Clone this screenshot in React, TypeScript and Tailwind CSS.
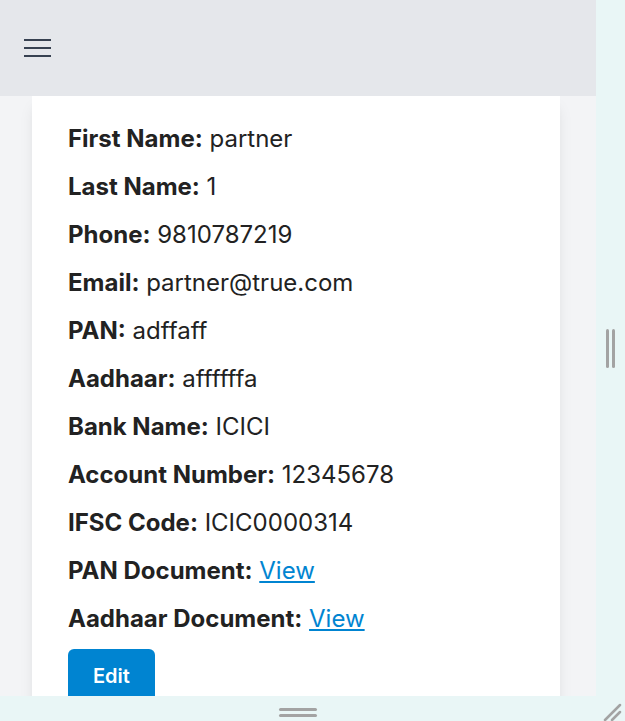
const fields: { label: string; value: string; link?: boolean }[] = [
  { label: 'First Name:', value: 'partner' },
  { label: 'Last Name:', value: '1' },
  { label: 'Phone:', value: '9810787219' },
  { label: 'Email:', value: 'partner@true.com' },
  { label: 'PAN:', value: 'adffaff' },
  { label: 'Aadhaar:', value: 'affffffa' },
  { label: 'Bank Name:', value: 'ICICI' },
  { label: 'Account Number:', value: '12345678' },
  { label: 'IFSC Code:', value: 'ICIC0000314' },
  { label: 'PAN Document:', value: 'View', link: true },
  { label: 'Aadhaar Document:', value: 'View', link: true },
];

export default function App() {
  return (
    <div
      className="w-[625px] h-[721px] flex flex-col overflow-hidden bg-[#e9f6f6]"
      style={{ fontFamily: 'Inter, "Noto Sans", sans-serif' }}
    >
      <div className="flex flex-1 min-h-0">
        <div className="w-[596px] flex flex-col bg-gray-100 overflow-hidden">
          <header className="h-24 shrink-0 bg-gray-200 flex items-center px-6 relative z-10">
            <svg width="28" height="20" viewBox="0 0 28 20">
              <path d="M0 2h27M0 10h27M0 18h27" stroke="#374151" strokeWidth="2" />
            </svg>
          </header>

          <div className="ml-8 w-[528px] bg-white shadow-lg px-9 pt-[27px] pb-6 text-[#222]">
            <div className="space-y-4">
              {fields.map((f) => (
                <p key={f.label} className="text-2xl leading-8">
                  <span className="font-bold">{f.label}</span>{' '}
                  {f.link ? (
                    <a href="#" className="text-sky-600 underline">
                      {f.value}
                    </a>
                  ) : (
                    <span>{f.value}</span>
                  )}
                </p>
              ))}
            </div>
            <button className="mt-[14px] px-[25px] pt-[13px] pb-[11px] bg-sky-600 text-white text-xl leading-7 font-semibold rounded-md">
              Edit
            </button>
          </div>
        </div>

        <div className="flex-1 flex items-center justify-center">
          <div className="flex gap-[3px]">
            <div className="w-[3px] h-[39px] bg-[#a3a3a3] rounded-sm" />
            <div className="w-[3px] h-[39px] bg-[#a3a3a3] rounded-sm" />
          </div>
        </div>
      </div>

      <div className="h-[25px] shrink-0 relative flex">
        <div className="w-[596px] flex items-center justify-center">
          <div className="flex flex-col gap-[3px] mt-[8px]">
            <div className="w-[38px] h-[3px] bg-[#a3a3a3] rounded-sm" />
            <div className="w-[38px] h-[3px] bg-[#a3a3a3] rounded-sm" />
          </div>
        </div>
        <svg width="20" height="20" viewBox="0 0 20 20" className="absolute right-[3px] bottom-0">
          <path d="M3 19L18 4M10 19L18 11" stroke="#a3a3a3" strokeWidth="2.5" strokeLinecap="round" />
        </svg>
      </div>
    </div>
  );
}
